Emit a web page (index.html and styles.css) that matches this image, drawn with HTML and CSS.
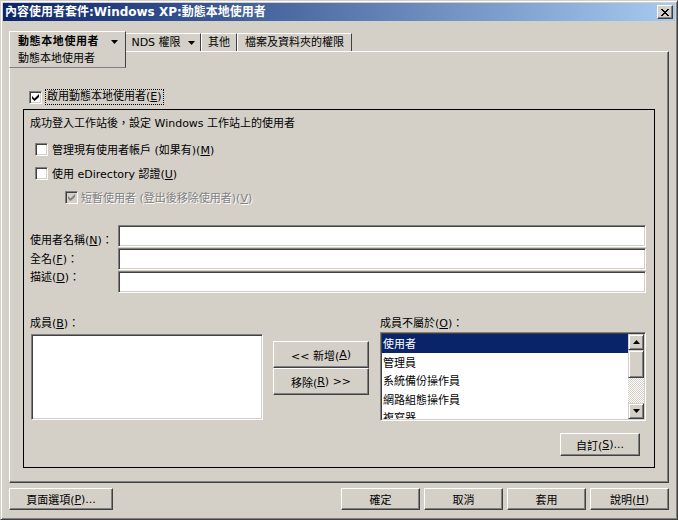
FILE: index.html
```html
<!DOCTYPE html>
<html lang="zh-Hant">
<head>
<meta charset="utf-8">
<title>內容使用者套件</title>
<link rel="stylesheet" href="styles.css">
</head>
<body>
<div class="window">
  <div class="titlebar">
    <span class="title-text">內容使用者套件:Windows XP:動態本地使用者</span>
    <div class="close-btn">
      <svg width="8" height="7" viewBox="0 0 8 7" shape-rendering="crispEdges"><path fill="#000" d="M0 0h2v1H0zM6 0h2v1H6zM1 1h2v1H1zM5 1h2v1H5zM2 2h4v1H2zM3 3h2v1H3zM2 4h4v1H2zM1 5h2v1H1zM5 5h2v1H5zM0 6h2v1H0zM6 6h2v1H6z"/></svg>
    </div>
  </div>

  <div class="client">
    <div class="tabs">
      <div class="tab tab-active">
        <div class="tab-head">
          <span class="tab-bold">動態本地使用者</span>
          <svg class="arrow" width="7" height="4" viewBox="0 0 7 4"><path fill="#000" d="M0 0h7L3.5 4z"/></svg>
        </div>
        <div class="tab-sub">動態本地使用者</div>
      </div>
      <div class="tab tab-nds">NDS 權限&nbsp;&nbsp;<svg class="arrow" width="7" height="4" viewBox="0 0 7 4"><path fill="#000" d="M0 0h7L3.5 4z"/></svg></div>
      <div class="tab tab-other">其他</div>
      <div class="tab tab-files">檔案及資料夾的權限</div>
    </div>

    <div class="panel">
      <div class="enable-row">
        <span class="cb"><svg width="7" height="7" viewBox="0 0 7 7"><path fill="#000" d="M0 2L2.5 4.5L7 0V3L2.5 7L0 4.5Z"/></svg></span>
        <span class="focus">啟用動態本地使用者(<u>E</u>)</span>
      </div>

      <div class="group">
        <div class="group-title">成功登入工作站後，設定 Windows 工作站上的使用者</div>

        <div class="check-row first">
          <span class="cb"></span>
          <span>管理現有使用者帳戶 (如果有)(<u>M</u>)</span>
        </div>
        <div class="check-row">
          <span class="cb"></span>
          <span>使用 eDirectory 認證(<u>U</u>)</span>
        </div>
        <div class="check-row indent disabled">
          <span class="cb cb-disabled"><svg width="7" height="7" viewBox="0 0 7 7"><path fill="#808080" d="M0 2L2.5 4.5L7 0V3L2.5 7L0 4.5Z"/></svg></span>
          <span>短暫使用者 (登出後移除使用者)(<u>V</u>)</span>
        </div>

        <div class="fields">
          <div class="field-labels">
            <div>使用者名稱(<u>N</u>)：</div>
            <div>全名(<u>F</u>)：</div>
            <div>描述(<u>D</u>)：</div>
          </div>
          <div class="field-inputs">
            <div class="input"></div>
            <div class="input"></div>
            <div class="input"></div>
          </div>
        </div>

        <div class="lists">
          <div class="col-left">
            <div class="list-label">成員(<u>B</u>)：</div>
            <div class="listbox listbox-left"></div>
          </div>
          <div class="col-mid">
            <div class="btn mid-btn">&lt;&lt; 新增(<u>A</u>)</div>
            <div class="btn mid-btn">移除(<u>R</u>) &gt;&gt;</div>
          </div>
          <div class="col-right">
            <div class="list-label">成員不屬於(<u>O</u>)：</div>
            <div class="listbox listbox-right">
              <div class="items">
                <div class="item sel">使用者</div>
                <div class="item">管理員</div>
                <div class="item">系統備份操作員</div>
                <div class="item">網路組態操作員</div>
                <div class="item">複寫器</div>
              </div>
              <div class="scrollbar">
                <div class="sb-btn"><svg width="7" height="4" viewBox="0 0 7 4"><path fill="#000" d="M0 4h7L3.5 0z"/></svg></div>
                <div class="sb-thumb"></div>
                <div class="sb-track"></div>
                <div class="sb-btn"><svg width="7" height="4" viewBox="0 0 7 4"><path fill="#000" d="M0 0h7L3.5 4z"/></svg></div>
              </div>
            </div>
            <div class="btn custom-btn">自訂(<u>S</u>)...</div>
          </div>
        </div>
      </div>
    </div>

    <div class="footer">
      <div class="btn page-btn">頁面選項(<u>P</u>)...</div>
      <div class="footer-right">
        <div class="btn foot-btn">確定</div>
        <div class="btn foot-btn">取消</div>
        <div class="btn foot-btn">套用</div>
        <div class="btn foot-btn">說明(<u>H</u>)</div>
      </div>
    </div>
  </div>
</div>
</body>
</html>
```

FILE: styles.css
```css
* { box-sizing: border-box; }
html, body { margin: 0; padding: 0; }
body {
  width: 678px;
  height: 520px;
  overflow: hidden;
  background: #d4d0c8;
  color: #000;
  font-family: "DejaVu Sans", "Noto Sans CJK TC", sans-serif;
  font-size: 11px;
}
u { text-decoration: underline; text-underline-offset: 1px; }

.window {
  width: 678px;
  height: 520px;
  border: 1px solid;
  border-color: #d4d0c8 #404040 #404040 #d4d0c8;
  box-shadow: inset 1px 1px #fff, inset -1px -1px #808080;
  padding: 2px;
  display: flex;
  flex-direction: column;
  background: #d4d0c8;
}

/* title bar */
.titlebar {
  height: 18px;
  flex: none;
  display: flex;
  align-items: center;
  justify-content: space-between;
  padding: 0 2px;
  background: linear-gradient(to right, #0a246a, #a6caf0);
  color: #fff;
}
.title-text {
  font-weight: bold;
  font-size: 12px;
  line-height: 18px;
  white-space: nowrap;
}
.close-btn {
  width: 16px;
  height: 14px;
  background: #d4d0c8;
  border: 1px solid;
  border-color: #fff #404040 #404040 #fff;
  box-shadow: inset -1px -1px #808080;
  display: flex;
  align-items: center;
  justify-content: center;
}

/* client area */
.client {
  flex: 1;
  display: flex;
  flex-direction: column;
  padding: 10px 6px 0 6px;
}

/* tabs */
.tabs {
  position: relative;
  z-index: 2;
  display: flex;
  height: 20px;
  align-items: flex-end;
}
.tab {
  height: 18px;
  background: #d4d0c8;
  border-top: 1px solid #fff;
  border-left: 1px solid #fff;
  border-right: 1px solid #404040;
  display: flex;
  align-items: center;
  justify-content: center;
  line-height: 16px;
  white-space: nowrap;
}
.tab .arrow { flex: none; }
.tab-active {
  align-self: flex-start;
  width: 117px;
  height: 37px;
  flex-direction: column;
  align-items: stretch;
  justify-content: flex-start;
  padding: 2px 0 0 8px;
  border-bottom: 1px solid #808080;
}
.tab-head {
  display: flex;
  align-items: center;
  justify-content: space-between;
  padding-right: 7px;
  height: 16px;
}
.tab-bold { font-weight: bold; letter-spacing: 0.6px; }
.tab-sub { line-height: 17px; }
.tab-nds { width: 75px; border-left: none; }
.tab-other { width: 36px; }
.tab-files { width: 115px; }

/* panel */
.panel {
  height: 432px;
  flex: none;
  border: 1px solid;
  border-color: #fff #404040 #404040 #fff;
  box-shadow: inset -1px -1px #808080;
  padding: 37px 0 0 13px;
}

.cb {
  flex: none;
  width: 13px;
  height: 13px;
  background: #fff;
  border: 1px solid;
  border-color: #808080 #fff #fff #808080;
  box-shadow: inset 1px 1px #404040, inset -1px -1px #d4d0c8;
  display: flex;
  align-items: center;
  justify-content: center;
}
.cb-disabled { background: #d4d0c8; }

.enable-row {
  display: flex;
  align-items: center;
  height: 16px;
  margin-left: 6px;
  gap: 3px;
}
.focus {
  border: 1px dotted #000;
  line-height: 14px;
  padding: 0 1px;
  white-space: nowrap;
}

.group {
  width: 632px;
  height: 359px;
  margin-top: 4px;
  border: 1px solid #000;
  padding: 6px 8px 0 6px;
}
.group-title { line-height: 16px; white-space: nowrap; }

.check-row {
  display: flex;
  align-items: center;
  gap: 4px;
  height: 16px;
  margin-top: 8px;
  margin-left: 5px;
  white-space: nowrap;
}
.check-row.first { margin-top: 9px; }
.check-row.indent { margin-left: 35px; gap: 3px; }
.disabled { color: #808080; text-shadow: 1px 1px #fff; }

/* fields */
.fields {
  display: flex;
  margin-top: 20px;
}
.field-labels {
  width: 88px;
  padding-top: 7px;
  line-height: 18.5px;
  white-space: nowrap;
}
.field-inputs {
  width: 528px;
  display: flex;
  flex-direction: column;
  gap: 1px;
}
.input, .listbox {
  background: #fff;
  border: 1px solid;
  border-color: #808080 #fff #fff #808080;
  box-shadow: inset 1px 1px #404040, inset -1px -1px #d4d0c8;
}
.input { height: 22px; }

/* lists */
.lists {
  display: flex;
  margin-top: 23px;
}
.list-label { line-height: 16px; white-space: nowrap; }
.col-left { width: 233px; }
.listbox-left {
  margin: 2px 0 0 1px;
  width: 232px;
  height: 86px;
}
.col-mid {
  width: 96px;
  margin-left: 10px;
  padding-top: 25px;
  display: flex;
  flex-direction: column;
}
.col-right {
  width: 266px;
  margin-left: 11px;
  display: flex;
  flex-direction: column;
}
.listbox-right {
  height: 89px;
  padding: 1px;
  display: flex;
}
.items {
  flex: 1;
  overflow: hidden;
}
.item {
  height: 18.5px;
  line-height: 17px;
  padding: 2px 0 0 1px;
  white-space: nowrap;
}
.item.sel { background: #0a246a; color: #fff; }

.scrollbar {
  width: 16px;
  flex: none;
  display: flex;
  flex-direction: column;
}
.sb-btn, .sb-thumb {
  flex: none;
  background: #d4d0c8;
  border: 1px solid;
  border-color: #d4d0c8 #404040 #404040 #d4d0c8;
  box-shadow: inset 1px 1px #fff, inset -1px -1px #808080;
}
.sb-btn {
  height: 16px;
  display: flex;
  align-items: center;
  justify-content: center;
}
.sb-thumb { height: 28px; }
.sb-track {
  flex: 1;
  background-color: #d4d0c8;
  background-image: repeating-conic-gradient(#fff 0 25%, #d4d0c8 0 50%);
  background-size: 2px 2px;
}

/* buttons */
.btn {
  background: #d4d0c8;
  border: 1px solid;
  border-color: #fff #404040 #404040 #fff;
  box-shadow: inset -1px -1px #808080;
  display: flex;
  align-items: center;
  justify-content: center;
  white-space: nowrap;
}
.mid-btn { height: 27px; }
.custom-btn {
  align-self: flex-end;
  width: 80px;
  height: 23px;
  margin: 12px 6px 0 0;
}

/* footer */
.footer {
  display: flex;
  justify-content: space-between;
  margin-top: 5px;
}
.footer .btn { height: 22px; }
.page-btn { width: 104px; }
.footer-right { display: flex; gap: 4px; }
.foot-btn { width: 79px; }
```
